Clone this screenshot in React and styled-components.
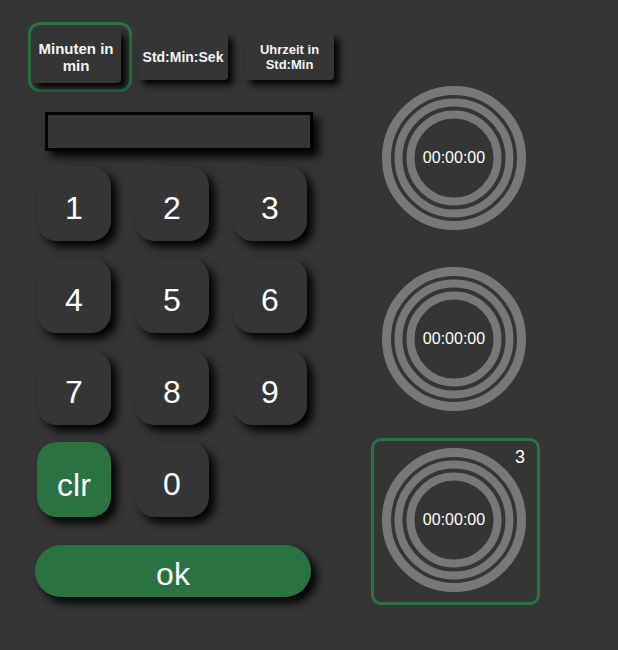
import React from 'react';
import styled, { createGlobalStyle } from 'styled-components';

const bg = '#353535';
const green = '#297343';
const ring = '#787878';

const GlobalStyle = createGlobalStyle`
  html, body {
    margin: 0;
    padding: 0;
    background: ${bg};
  }
  body {
    font-family: "Liberation Sans", Arial, sans-serif;
    color: #fff;
  }
`;

const Page = styled.div`
  display: flex;
  align-items: flex-start;
  padding: 22px 0 0 28px;
  min-height: 650px;
  box-sizing: border-box;
`;

const LeftColumn = styled.div`
  display: flex;
  flex-direction: column;
  width: 318px;
`;

const TabRow = styled.div`
  display: flex;
  align-items: center;
  gap: 3px;
`;

const TabSlot = styled.div`
  border: 3px solid ${props => (props.$active ? green : 'transparent')};
  border-radius: 12px;
  padding: 5px 8px 6px 0;
`;

const TabButton = styled.div`
  width: ${props => props.$width}px;
  height: ${props => (props.$active ? 53 : 47)}px;
  display: flex;
  align-items: center;
  justify-content: center;
  text-align: center;
  background: ${bg};
  border-radius: 4px;
  box-shadow: 5px 5px 7px rgba(0, 0, 0, 0.95);
  font-weight: bold;
  font-size: ${props => props.$fontSize}px;
  line-height: ${props => props.$fontSize + 2}px;
  color: #f4f4f4;
  box-sizing: border-box;
  padding: 0 4px;
`;

const Display = styled.div`
  margin: 20px 0 0 17px;
  width: 268px;
  height: 39px;
  box-sizing: border-box;
  border: 3px solid #000;
  box-shadow: 6px 6px 8px rgba(0, 0, 0, 0.9);
`;

const Keypad = styled.div`
  display: grid;
  grid-template-columns: repeat(3, 74px);
  grid-auto-rows: 75px;
  column-gap: 24px;
  row-gap: 17px;
  margin: 15px 0 0 9px;
`;

const Key = styled.div`
  display: flex;
  align-items: center;
  justify-content: center;
  box-sizing: border-box;
  padding-top: ${props => (props.$accent ? 12 : 9)}px;
  border-radius: 20px;
  background: ${props => (props.$accent ? green : bg)};
  box-shadow: 6px 6px 8px rgba(0, 0, 0, 0.95);
  font-size: 32px;
  color: #fff;
`;

const OkButton = styled.div`
  margin: 28px 0 0 7px;
  width: 276px;
  height: 52px;
  box-sizing: border-box;
  padding-top: 6px;
  border-radius: 26px;
  background: ${green};
  box-shadow: 6px 6px 8px rgba(0, 0, 0, 0.95);
  display: flex;
  align-items: center;
  justify-content: center;
  font-size: 32px;
  color: #fff;
`;

const RightColumn = styled.div`
  display: flex;
  flex-direction: column;
  gap: 14px;
  margin: 54px 0 0 25px;
`;

const TimerBox = styled.div`
  position: relative;
  width: 169px;
  height: 167px;
  box-sizing: border-box;
  border: 3px solid ${props => (props.$active ? green : 'transparent')};
  border-radius: 10px;
  display: flex;
  align-items: center;
  justify-content: center;
  padding: 0 3px 4px 0;
`;

const Dial = styled.div`
  position: relative;
  width: 144px;
  height: 144px;
  display: flex;
  align-items: center;
  justify-content: center;
`;

const Rings = styled.svg`
  position: absolute;
  inset: 0;
`;

const Time = styled.span`
  position: relative;
  font-size: 16px;
  color: #fff;
`;

const Badge = styled.span`
  position: absolute;
  top: 7px;
  right: 12px;
  font-size: 18px;
  line-height: 18px;
  color: #fff;
`;

const tabs = [
  { label: 'Minuten in min', width: 90, fontSize: 15, active: true },
  { label: 'Std:Min:Sek', width: 90, fontSize: 14 },
  { label: 'Uhrzeit in Std:Min', width: 89, fontSize: 13 },
];

const keys = ['1', '2', '3', '4', '5', '6', '7', '8', '9', 'clr', '0'];

const timers = [
  { id: 1, time: '00:00:00' },
  { id: 2, time: '00:00:00' },
  { id: 3, time: '00:00:00', active: true },
];

function Timer({ time, active, index }) {
  return (
    <TimerBox $active={active}>
      {active && <Badge>{index}</Badge>}
      <Dial>
        <Rings width="144" height="144" viewBox="0 0 144 144">
          <circle cx="72" cy="72" r="67.5" fill="none" stroke={ring} strokeWidth="9" />
          <circle cx="72" cy="72" r="55.5" fill="none" stroke={ring} strokeWidth="8" />
          <circle cx="72" cy="72" r="43.5" fill="none" stroke={ring} strokeWidth="8" />
        </Rings>
        <Time>{time}</Time>
      </Dial>
    </TimerBox>
  );
}

export default function App() {
  return (
    <>
      <GlobalStyle />
      <Page>
        <LeftColumn>
          <TabRow>
            {tabs.map(tab => (
              <TabSlot key={tab.label} $active={tab.active}>
                <TabButton $active={tab.active} $width={tab.width} $fontSize={tab.fontSize}>
                  {tab.label}
                </TabButton>
              </TabSlot>
            ))}
          </TabRow>
          <Display />
          <Keypad>
            {keys.map(k => (
              <Key key={k} $accent={k === 'clr'}>{k}</Key>
            ))}
          </Keypad>
          <OkButton>ok</OkButton>
        </LeftColumn>
        <RightColumn>
          {timers.map(t => (
            <Timer key={t.id} index={t.id} time={t.time} active={t.active} />
          ))}
        </RightColumn>
      </Page>
    </>
  );
}
